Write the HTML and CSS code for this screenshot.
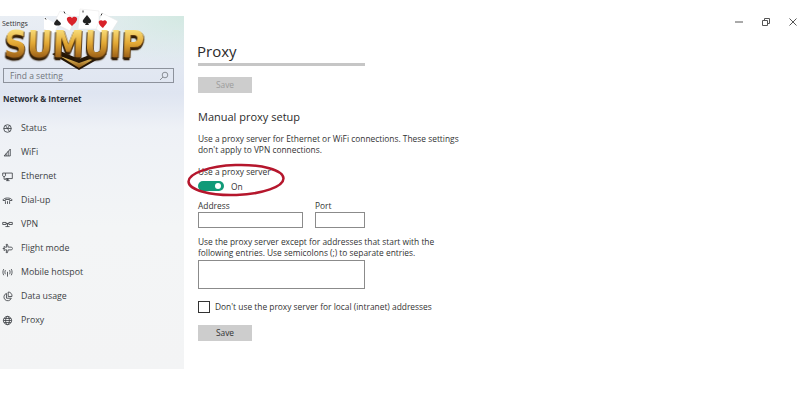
FILE: index.html
```html
<!DOCTYPE html>
<html>
<head>
	<title>Settings</title>
	<link rel="stylesheet" href="styles.css">
</head>
<body>
<div class="window">
	<div class="side">
		<div class="side-title">Settings</div>
		<div class="search">
			<span>Find a setting</span>
			<svg width="10" height="10" viewBox="0 0 10 10" class="search-icon"><circle cx="6" cy="4" r="2.8"/><path d="M4 6 1 9"/></svg>
		</div>
		<div class="side-head">Network &amp; Internet</div>
		<ul class="nav">
			<li><svg viewBox="0 0 16 16"><circle cx="8" cy="8" r="5.5"/><path d="M2.5 8h11M5 3.5 11 12.5M11 3.5 8 8"/></svg>Status</li>
			<li><svg viewBox="0 0 16 16"><path d="M3 13 12 3v10zM6 13V9.500M9 13V6"/></svg>WiFi</li>
			<li><svg viewBox="0 0 16 16"><path d="M5 3h10v8H5M1 3h4v4l-1 1H2L1 7zM3 8v4h7M8 11v3M6 14h5"/></svg>Ethernet</li>
			<li><svg viewBox="0 0 16 16"><path d="M1.500 7C3 3.500 13 3.500 14.500 7v1H11V6.500H5V8H1.500zM5 9v4M8 9v4M11 9v4"/></svg>Dial-up</li>
			<li><svg viewBox="0 0 16 16"><path d="M1 5h5v3H1zM10 5h5v3h-5zM6 6.500h4M8 6.500V11M5 11h6"/></svg>VPN</li>
			<li><svg viewBox="0 0 16 16"><path d="M1 8h3M6 2h2l1 4h5l1.500 2L14 10H9l-1 4H6l1-4H4.500L3 11V5l1.500 1H7z"/></svg>Flight mode</li>
			<li><svg viewBox="0 0 16 16"><path d="M8 7v7M2.500 3C1 6 1 9 2.500 12M13.500 3c1.500 3 1.500 6 0 9M5 4.500c-1 2-1 4 0 6M11 4.500c1 2 1 4 0 6"/></svg>Mobile hotspot</li>
			<li><svg viewBox="0 0 16 16"><path d="M6.500 3.500a5.500 5.500 0 1 0 7 7H6.500z"/><path d="M9 1.500A5.500 5.500 0 0 1 14.500 8H9z"/></svg>Data usage</li>
			<li><svg viewBox="0 0 16 16"><circle cx="8" cy="8" r="6"/><ellipse cx="8" cy="8" rx="2.800" ry="6"/><path d="M2 8h12M3 5h10M3 11h10"/></svg>Proxy</li>
		</ul>
	</div>
	<div class="main">
		<h1>Proxy</h1>
		<div class="rule"></div>
		<div class="btn btn-off">Save</div>
		<h2>Manual proxy setup</h2>
		<p class="desc">Use a proxy server for Ethernet or WiFi connections. These settings<br>don't apply to VPN connections.</p>
		<div class="label">Use a proxy server</div>
		<div class="switch-row">
			<span class="switch"><span class="knob"></span></span>
			<span>On</span>
		</div>
		<div class="fields">
			<div>
				<div class="field-label">Address</div>
				<div class="input input-addr"></div>
			</div>
			<div>
				<div class="field-label">Port</div>
				<div class="input input-port"></div>
			</div>
		</div>
		<p class="desc desc2">Use the proxy server except for addresses that start with the<br>following entries. Use semicolons (;) to separate entries.</p>
		<div class="input input-big"></div>
		<div class="check-row">
			<span class="check"></span>
			<span>Don't use the proxy server for local (intranet) addresses</span>
		</div>
		<div class="btn">Save</div>
	</div>
	<div class="controls">
		<svg width="10" height="10" viewBox="0 0 10 10"><path d="M1 5h8"/></svg>
		<svg width="10" height="10" viewBox="0 0 10 10"><path d="M1.500 3.500h5v5h-5zM3.500 3.500V1.500h5v5H6.500" /></svg>
		<svg width="10" height="10" viewBox="0 0 10 10"><path d="M1.500 1.500l7 7M8.500 1.500l-7 7"/></svg>
	</div>
</div>

<!-- logo and the red ring sit over the page -->
<div class="logo">
	<svg class="logo-art" width="150" height="70" viewBox="0 0 150 70">
		<defs>
			<linearGradient id="gold" x1="0" y1="0" x2="0" y2="1">
				<stop offset="0" stop-color="#f6d26a"/>
				<stop offset="1" stop-color="#8a5512"/>
			</linearGradient>
		</defs>
		<path d="M60 6 75 13 70 26 54 18z" fill="#fff" stroke="#e4e4e4" stroke-width=".5"/>
		<path d="M80 4 99 6 99 24 78 24z" fill="#fff" stroke="#e4e4e4" stroke-width=".5"/>
		<path d="M102 8 118 16 108 32 96 24z" fill="#fff" stroke="#e4e4e4" stroke-width=".5"/>
		<path d="M44 12 58 20 54 28 44 24z" fill="#fff"/>
		<path d="M67 13c2-2 4-1 5 0 1-1 3-2 5 0 1 3-3 6-5 8-2-2-6-5-5-8z" fill="#d8222a"/>
		<path d="M87 10c2 3 5 5 4 7-1 2-3 1-3 1l1 2h-4l1-2s-2 1-3-1c-1-2 2-4 4-7z" fill="#222"/>
		<path d="M99 16c1-1 3-1 4 0 1-1 3-1 4 1 0 2-3 4-4 6-3-2-5-5-4-7z" fill="#d8222a"/>
		<path d="M57 14c1 2 4 3 4 5-1 2-6 2-7 0 0-2 2-3 3-5z" fill="#222"/>
		<path d="M64 6.500l1 2M83 5.500l0 2M102 8.500l-1 2M45 13l1 1.500" stroke="#333" stroke-width="1"/>
		<path d="M52 49 79 65 107 49 100 46 79 54 60 46z" fill="#241505"/>
		<path d="M60 51 79 58 99 51 79 63z" fill="url(#gold)"/>
	</svg>
	<span class="logo-text">SUMUIP</span>
</div>
<svg class="ring" width="102" height="36" viewBox="0 0 102 36"><ellipse cx="50" cy="17" rx="47.500" ry="15" transform="rotate(-2 50 17)"/></svg>
</body>
</html>
```

FILE: styles.css
```css
body {
	margin: 0;
	background: #fff;
	font-family: "Open Sans", "Liberation Sans", sans-serif;
	color: #333;
	font-size: 8.400px;
}
.window {
	display: flex;
	align-items: flex-start;
	height: 400px;
	overflow: hidden;
}
.side {
	width: 184px;
	height: 353px;
	margin-top: 16px;
	flex: none;
	background:
		radial-gradient(ellipse 120px 50px at 100% 0, #d3e9e2 0, rgba(211,233,226,0) 100%),
		linear-gradient(180deg, #e9eef4 0, #dfe5f1 22%, #eef1f6 32%, #f3f5f6 60%, #f3f4f5 100%);
}
.side-title {
	padding: 3px 0 0 2px;
	font-size: 7px;
	line-height: 10px;
}
.search {
	display: flex;
	justify-content: space-between;
	align-items: center;
	width: 171px;
	height: 15px;
	box-sizing: border-box;
	margin: 39px 0 0 3px;
	padding: 0 4px 0 6px;
	border: 1px solid #8d929c;
	font-size: 8.500px;
	color: #70757c;
}
.search-icon {
	fill: none;
	stroke: #8a8f96;
	stroke-width: 1;
}
.side-head {
	margin: 10px 0 0 3px;
	font-weight: 700;
	font-size: 8px;
	line-height: 12px;
	color: #2c3038;
}
.nav {
	list-style: none;
	margin: 11px 0 0;
	padding: 0;
}
.nav li {
	display: flex;
	align-items: center;
	gap: 8px;
	height: 24px;
	padding-left: 2px;
	font-size: 8.800px;
	color: #3c3f44;
}
.nav svg {
	width: 11px;
	height: 11px;
	flex: none;
	fill: none;
	stroke: #3c3f44;
	stroke-width: 1.200;
}
.main {
	flex: none;
	width: 400px;
	margin-left: 14px;
	padding-top: 40px;
}
h1 {
	margin: 0 0 0 -1px;
	font-weight: 400;
	font-size: 15px;
	line-height: 22px;
	color: #2b2b2b;
}
.rule {
	width: 167px;
	height: 3px;
	margin-top: 1px;
	background: #c6c6c6;
}
.btn {
	width: 54px;
	height: 16px;
	background: #cdcdcd;
	text-align: center;
	line-height: 16px;
	color: #333;
}
.btn-off {
	margin-top: 11px;
	color: #9c9c9c;
}
h2 {
	margin: 16px 0 0;
	font-weight: 500;
	font-size: 11px;
	line-height: 16px;
	color: #2b2b2b;
}
.desc {
	margin: 9px 0 0;
	line-height: 10.500px;
}
.label {
	margin-top: 11px;
	line-height: 11px;
}
.switch-row {
	display: flex;
	align-items: center;
	gap: 7px;
	height: 14px;
	margin-top: 2px;
}
.switch {
	display: flex;
	justify-content: flex-end;
	align-items: center;
	width: 26px;
	height: 10px;
	padding-right: 3px;
	box-sizing: border-box;
	border-radius: 5px;
	background: #119a78;
}
.knob {
	width: 6px;
	height: 6px;
	border-radius: 50%;
	background: #fff;
}
.fields {
	display: flex;
	gap: 12px;
	margin-top: 6px;
}
.field-label {
	line-height: 13px;
}
.input {
	box-sizing: border-box;
	height: 16px;
	border: 1px solid #8b8b8b;
	background: #fff;
}
.input-addr {
	width: 105px;
}
.input-port {
	width: 50px;
}
.desc2 {
	margin-top: 8px;
	line-height: 11px;
}
.input-big {
	width: 167px;
	height: 29px;
	margin-top: 2px;
}
.check-row {
	display: flex;
	align-items: center;
	gap: 5px;
	margin-top: 11px;
	height: 13px;
}
.check {
	box-sizing: border-box;
	width: 12px;
	height: 12px;
	border: 1px solid #333;
}
.check-row + .btn {
	margin-top: 12px;
}
.controls {
	display: flex;
	gap: 17px;
	margin: 17px 0 0 136px;
}
.controls svg {
	fill: none;
	stroke: #555;
	stroke-width: 1;
}
.logo {
	position: absolute;
	left: 0;
	top: 5px;
	width: 150px;
	height: 70px;
}
.logo-art {
	position: absolute;
	left: 0;
	top: 0;
}
.logo-text {
	position: absolute;
	left: 5px;
	top: 19px;
	font-family: "DejaVu Sans", sans-serif;
	font-weight: 700;
	font-size: 34px;
	line-height: 34px;
	transform: scale(.93, 1.120) skewX(-3deg);
	transform-origin: left top;
	background: linear-gradient(180deg, #f8dc78 15%, #e3a935 50%, #a2661a 85%);
	-webkit-background-clip: text;
	background-clip: text;
	color: transparent;
	filter: drop-shadow(1px 1px 0 #5c3a10) drop-shadow(-1px 2px 0 #2e1b06);
}
.ring {
	position: absolute;
	left: 186px;
	top: 163px;
	fill: none;
	stroke: #b5162c;
	stroke-width: 2.500;
}
```
